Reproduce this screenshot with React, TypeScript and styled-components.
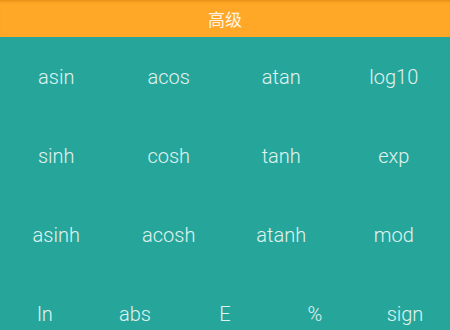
import React from "react";
import styled, { createGlobalStyle } from "styled-components";

const Global = createGlobalStyle`
  html, body { margin: 0; padding: 0; background: #26a69a; }
  body { font-family: Roboto, "Noto Sans CJK SC", sans-serif; }
`;

const Screen = styled.div`
  width: 450px;
  height: 330px;
  overflow: hidden;
  display: flex;
  flex-direction: column;
  background: #26a69a;
`;

const Header = styled.header`
  height: 37px;
  flex: none;
  display: flex;
  align-items: center;
  justify-content: center;
  background: #ffa726;
  box-shadow: inset 0 3px 3px -2px rgba(200, 110, 0, 0.5);
  color: #fff3e0;
  font-family: Roboto, "Noto Sans CJK SC", sans-serif;
  font-size: 17px;
  padding-bottom: 1px;
  box-sizing: border-box;
`;

const Row = styled.div<{ $cols: number }>`
  height: 79px;
  flex: none;
  display: grid;
  grid-template-columns: repeat(${(p) => p.$cols}, 1fr);
`;

const Key = styled.div`
  display: flex;
  align-items: center;
  justify-content: center;
  color: #e0f2f1;
  font-family: Roboto, sans-serif;
  font-weight: 300;
  font-size: 20px;
`;

const rows: string[][] = [
  ["asin", "acos", "atan", "log10"],
  ["sinh", "cosh", "tanh", "exp"],
  ["asinh", "acosh", "atanh", "mod"],
  ["ln", "abs", "E", "%", "sign"],
];

export default function App() {
  return (
    <Screen>
      <Global />
      <Header>高级</Header>
      {rows.map((r, i) => (
        <Row key={i} $cols={r.length}>
          {r.map((k) => (
            <Key key={k}>{k}</Key>
          ))}
        </Row>
      ))}
    </Screen>
  );
}
